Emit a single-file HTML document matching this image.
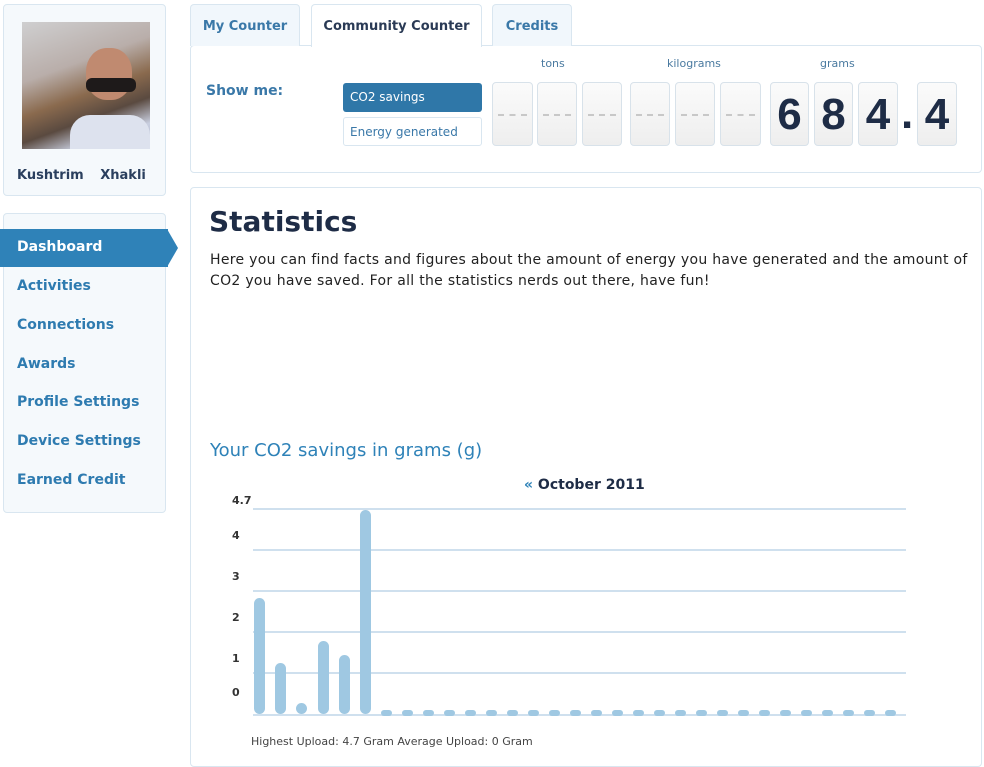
<!DOCTYPE html>
<html><head><meta charset="utf-8"><style>
*{margin:0;padding:0;box-sizing:border-box}
body{width:984px;height:755px;overflow:hidden;background:#fff;font-family:"DejaVu Sans","Liberation Sans",sans-serif;position:relative;color:#2a3a55}
.abs{position:absolute}
.box{position:absolute;border:1px solid #d9e6f0;border-radius:4px;background:#fff}
.tab{position:absolute;top:4px;height:42px;border:1px solid #d9e6f0;border-bottom:none;border-radius:4px 4px 0 0;background:#f1f7fc;font-size:13px;font-weight:bold;color:#3a78a8;text-align:center;line-height:44px}
.nav{position:absolute;left:17px;font-size:14px;font-weight:bold;color:#2e7bb0}
.d{position:absolute;top:82px;height:64px;border:1px solid #d8e2ea;border-radius:4px;background:linear-gradient(#fbfbfb,#eeeeee);font-family:"Liberation Sans",sans-serif;font-size:44px;font-weight:bold;color:#1e2c46;text-align:center;line-height:64px}
.d.e:after{content:"";position:absolute;left:5px;right:5px;top:31px;border-top:2px dashed #c8c8c8}
.lbl{position:absolute;top:57px;font-size:11px;color:#4a7aa0}
.g{position:absolute;left:253px;width:653px;height:2px;background:#cfe0ee}
.b{position:absolute;width:11px;background:#9fc8e2;border-radius:6px}
.y{position:absolute;font-size:11px;font-weight:bold;color:#333;left:232px}
</style></head><body>
<div class="box" style="left:3px;top:4px;width:163px;height:192px;background:#f5f9fc"></div>
<div class="abs" style="left:22px;top:22px;width:128px;height:127px;background:linear-gradient(160deg,#cfcfd0 0%,#b9aeaa 35%,#8a6a4e 55%,#5a4a40 70%,#c9cfe0 85%,#aab3c8 100%)"></div>
<div class="abs" style="left:86px;top:48px;width:46px;height:52px;border-radius:45%;background:#c08a70"></div>
<div class="abs" style="left:86px;top:78px;width:50px;height:14px;border-radius:6px;background:#1e1a1a"></div>
<div class="abs" style="left:70px;top:115px;width:80px;height:34px;border-radius:20px 20px 0 0;background:#dde2ee"></div>
<div class="abs" style="left:17px;top:168px;font-size:13px;font-weight:bold;color:#2a3f5e;word-spacing:12px">Kushtrim Xhakli</div>
<div class="box" style="left:3px;top:213px;width:163px;height:300px;background:#f5f9fc"></div>
<div class="abs" style="left:0;top:229px;width:168px;height:38px;background:#2f82b8"></div>
<div class="abs" style="left:167px;top:229px;width:0;height:0;border-top:19px solid transparent;border-bottom:19px solid transparent;border-left:11px solid #2f82b8"></div>
<div class="nav" style="top:239px;color:#fff">Dashboard</div>
<div class="nav" style="top:278px">Activities</div>
<div class="nav" style="top:317px">Connections</div>
<div class="nav" style="top:356px">Awards</div>
<div class="nav" style="top:394px">Profile Settings</div>
<div class="nav" style="top:433px">Device Settings</div>
<div class="nav" style="top:472px">Earned Credit</div>

<div class="box" style="left:190px;top:45px;width:792px;height:128px"></div>
<div class="tab" style="left:190px;width:110px">My Counter</div>
<div class="tab" style="left:311px;width:171px;background:#fff;color:#2a3a55;height:43px">Community Counter</div>
<div class="tab" style="left:492px;width:80px">Credits</div>
<div class="abs" style="left:206px;top:83px;font-size:14px;font-weight:bold;color:#3a78a8">Show me:</div>
<div class="abs" style="left:343px;top:83px;width:139px;height:29px;background:#2f77a8;border-radius:3px;color:#fff;font-size:12px;line-height:29px;padding-left:7px">CO2 savings</div>
<div class="abs" style="left:343px;top:117px;width:139px;height:29px;border:1px solid #d9e6f0;border-radius:3px;color:#3a78a8;font-size:12px;line-height:28px;padding-left:6px">Energy generated</div>
<div class="lbl" style="left:541px">tons</div>
<div class="lbl" style="left:667px">kilograms</div>
<div class="lbl" style="left:820px">grams</div>
<div class="d e" style="left:492px;width:41px"></div>
<div class="d e" style="left:537px;width:40px"></div>
<div class="d e" style="left:582px;width:40px"></div>
<div class="d e" style="left:630px;width:40px"></div>
<div class="d e" style="left:675px;width:40px"></div>
<div class="d e" style="left:720px;width:41px"></div>
<div class="d" style="left:770px;width:39px">6</div>
<div class="d" style="left:814px;width:39px">8</div>
<div class="d" style="left:858px;width:40px">4</div>
<div class="abs" style="left:901px;top:82px;font-family:'Liberation Sans',sans-serif;font-size:44px;font-weight:bold;color:#1e2c46;line-height:64px">.</div>
<div class="d" style="left:917px;width:40px">4</div>

<div class="box" style="left:190px;top:187px;width:792px;height:580px"></div>
<div class="abs" style="left:209px;top:205px;font-size:28px;font-weight:bold;color:#1e2c46">Statistics</div>
<div class="abs" style="left:210px;top:250px;width:760px;font-size:14px;line-height:21px;color:#222;letter-spacing:0.3px">Here you can find facts and figures about the amount of energy you have generated and the amount of CO2 you have saved. For all the statistics nerds out there, have fun!</div>
<div class="abs" style="left:210px;top:440px;font-size:18px;color:#2e82b8">Your CO2 savings in grams (g)</div>
<div class="abs" style="left:524px;top:477px;font-size:14px;font-weight:bold;color:#1e2c46"><span style="color:#2e82b8">«</span> October 2011</div>
<div class="y" style="top:494px">4.7</div><div class="y" style="top:529px">4</div><div class="y" style="top:570px">3</div><div class="y" style="top:611px">2</div><div class="y" style="top:652px">1</div><div class="y" style="top:686px">0</div>
<div class="g" style="top:508px"></div><div class="g" style="top:549px"></div><div class="g" style="top:590px"></div><div class="g" style="top:631px"></div><div class="g" style="top:672px"></div><div class="g" style="top:714px"></div>
<div class="b" style="left:254px;top:598px;height:116px"></div>
<div class="b" style="left:275px;top:663px;height:51px"></div>
<div class="b" style="left:296px;top:703px;height:11px"></div>
<div class="b" style="left:318px;top:641px;height:73px"></div>
<div class="b" style="left:339px;top:655px;height:59px"></div>
<div class="b" style="left:360px;top:510px;height:204px"></div>
<div id="dots"></div>
<div class="abs" style="left:251px;top:735px;font-size:11px;color:#444">Highest Upload: 4.7 Gram Average Upload: 0 Gram</div>
<script>
var h='';for(var i=0;i<25;i++){h+='<div class="b" style="left:'+(381+i*21)+'px;top:710px;height:6px"></div>';}
document.getElementById('dots').innerHTML=h;
</script>
</body></html>
